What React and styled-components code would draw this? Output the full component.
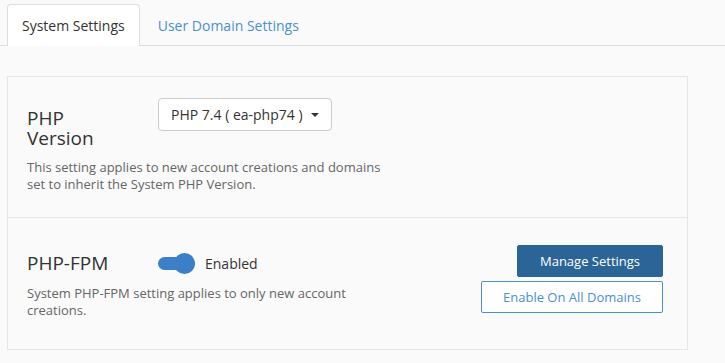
import styled, { createGlobalStyle } from "styled-components";

const GlobalStyle = createGlobalStyle`
  body {
    margin: 0;
    background: #fafafa;
    font-family: "Open Sans", "Liberation Sans", sans-serif;
    color: #333;
  }
`;

const App = () => (
  <Page>
    <GlobalStyle />
    <TabBar>
      <Tab active>System Settings</Tab>
      <Tab>User Domain Settings</Tab>
    </TabBar>
    <Panel>
      <Section>
        <Row>
          <Label offset>PHP Version</Label>
          <Select>
            PHP 7.4 ( ea-php74 )
            <Caret />
          </Select>
        </Row>
        <Help>
          This setting applies to new account creations and domains set to
          inherit the System PHP Version.
        </Help>
      </Section>
      <Section fpm>
        <FpmLeft>
          <Row center>
            <Label>PHP-FPM</Label>
            <Toggle>
              <Knob />
            </Toggle>
            <ToggleText>Enabled</ToggleText>
          </Row>
          <Help>
            System PHP-FPM setting applies to only new account creations.
          </Help>
        </FpmLeft>
        <Buttons>
          <Button primary>Manage Settings</Button>
          <Button wide>Enable On All Domains</Button>
        </Buttons>
      </Section>
    </Panel>
  </Page>
);

const Page = styled.div`
  padding-top: 4px;
`;

const TabBar = styled.div`
  display: flex;
  padding-left: 7px;
  border-bottom: 1px solid #ddd;
  height: 41px;
`;

const Tab = styled.div`
  height: ${(p) => (p.active ? "42px" : "41px")};
  box-sizing: border-box;
  padding: 0 14px;
  display: flex;
  align-items: center;
  font-size: 14px;
  color: ${(p) => (p.active ? "#333" : "#4a8fd6")};
  background: ${(p) => (p.active ? "#fff" : "transparent")};
  border: 1px solid ${(p) => (p.active ? "#ddd" : "transparent")};
  border-bottom: none;
  border-radius: 4px 4px 0 0;
  margin-right: 3px;
`;

const Panel = styled.div`
  margin: 30px 37px 0 7px;
  border: 1px solid #e6e6e6;
  background: #fafafa;
`;

const Section = styled.div`
  padding: ${(p) => (p.fpm ? "27px 24px 30px 19px" : "21px 20px 24px 19px")};
  display: ${(p) => (p.fpm ? "flex" : "block")};
  justify-content: space-between;
  align-items: flex-start;
  & + & {
    border-top: 1px solid #e6e6e6;
  }
`;

const Row = styled.div`
  display: flex;
  align-items: ${(p) => (p.center ? "center" : "flex-start")};
  height: ${(p) => (p.center ? "36px" : "auto")};
`;

const Label = styled.div`
  width: 131px;
  flex-shrink: 0;
  margin-top: ${(p) => (p.offset ? "10px" : "0")};
  font-size: 19px;
  line-height: 20px;
  color: #333;
  padding-right: 40px;
  box-sizing: border-box;
`;

const Select = styled.div`
  height: 33px;
  box-sizing: border-box;
  padding: 0 12px 0 12px;
  display: flex;
  align-items: center;
  gap: 8px;
  font-size: 14px;
  color: #333;
  background: #fff;
  border: 1px solid #ccc;
  border-radius: 4px;
`;

const Caret = styled.span`
  width: 0;
  height: 0;
  border-left: 4px solid transparent;
  border-right: 4px solid transparent;
  border-top: 4px solid #333;
`;

const Help = styled.p`
  margin: 11px 0 0;
  max-width: 365px;
  font-size: 13px;
  line-height: 17px;
  color: #666;
`;

const FpmLeft = styled.div`
  display: flex;
  flex-direction: column;
  & > ${Help} {
    margin-top: 4px;
  }
`;

const Toggle = styled.div`
  position: relative;
  width: 37px;
  height: 13px;
  border-radius: 7px;
  background: #3b80c6;
`;

const Knob = styled.span`
  position: absolute;
  right: 0;
  top: -4px;
  width: 21px;
  height: 21px;
  border-radius: 50%;
  background: #3b80c6;
`;

const ToggleText = styled.span`
  margin-left: 10px;
  font-size: 14px;
  color: #333;
`;

const Buttons = styled.div`
  display: flex;
  flex-direction: column;
  align-items: flex-end;
  gap: 4px;
`;

const Button = styled.div`
  width: ${(p) => (p.wide ? "182px" : "146px")};
  height: 32px;
  box-sizing: border-box;
  display: flex;
  align-items: center;
  justify-content: center;
  font-size: 13px;
  border-radius: 2px;
  color: ${(p) => (p.primary ? "#fff" : "#4a8fd6")};
  background: ${(p) => (p.primary ? "#2b6597" : "#fff")};
  border: 1px solid ${(p) => (p.primary ? "#2b6597" : "#4a8fd6")};
`;

export default App;
